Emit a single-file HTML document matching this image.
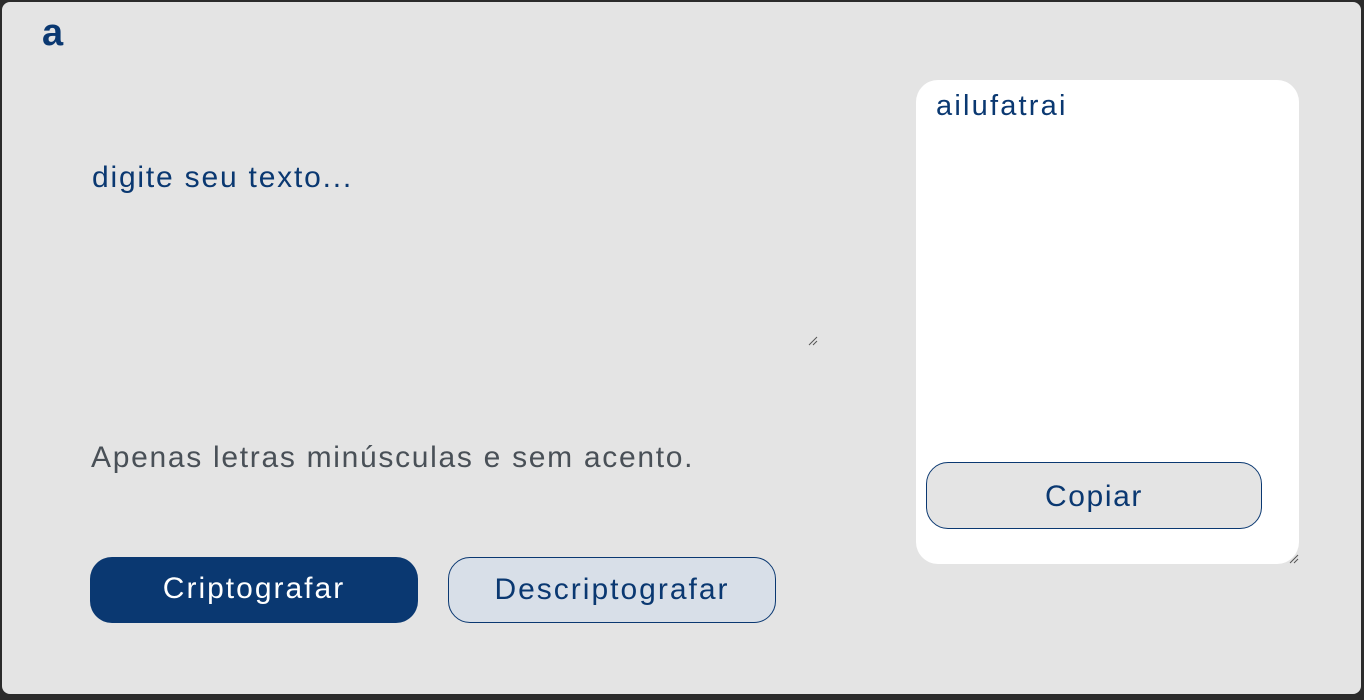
<!DOCTYPE html>
<html><head><meta charset="utf-8"><style>
html,body{margin:0;padding:0;width:1364px;height:700px;background:#2b2b2b;overflow:hidden}
.page{position:absolute;left:2px;top:2px;width:1359px;height:692px;background:#e4e4e4;border-radius:8px;font-family:"Liberation Sans",sans-serif}
.t{position:absolute;white-space:nowrap}
.logo{left:40px;top:10px;font-size:38px;color:#0a3871;font-weight:bold}
.btn{position:absolute;box-sizing:border-box;border-radius:22px;text-align:center;font-size:30px;line-height:64px;letter-spacing:2px}
</style></head><body>
<div class="page">
<div class="t logo">a</div>
<div class="t" style="left:90px;top:159px;font-size:30px;color:#0a3871;letter-spacing:1.8px">digite seu texto...</div>
<svg style="position:absolute;left:806px;top:334px" width="10" height="10"><path d="M9 1L1 9M9 5L5 9" stroke="#555" stroke-width="1"/></svg>
<div class="t" style="left:89px;top:439px;font-size:30px;color:#495057;letter-spacing:1.7px">Apenas letras minúsculas e sem acento.</div>
<div class="btn" style="left:88px;top:555px;width:328px;height:66px;background:#0a3871;color:#fff">Criptografar</div>
<div class="btn" style="left:446px;top:555px;width:328px;height:66px;background:#d8dfe8;border:1px solid #0a3871;color:#0a3871">Descriptografar</div>
<div style="position:absolute;left:914px;top:78px;width:383px;height:484px;background:#fff;border-radius:22px"></div>
<svg style="position:absolute;left:1287px;top:552px" width="10" height="10"><path d="M9 1L1 9M9 5L5 9" stroke="#555" stroke-width="1"/></svg>
<div class="t" style="left:934px;top:88px;font-size:29px;color:#0a3871;letter-spacing:2.2px">ailufatrai</div>
<div class="btn" style="left:924px;top:460px;width:336px;height:67px;background:#e4e4e4;border:1px solid #0a3871;color:#0a3871;line-height:67px;letter-spacing:1.6px">Copiar</div>
</div>
</body></html>
